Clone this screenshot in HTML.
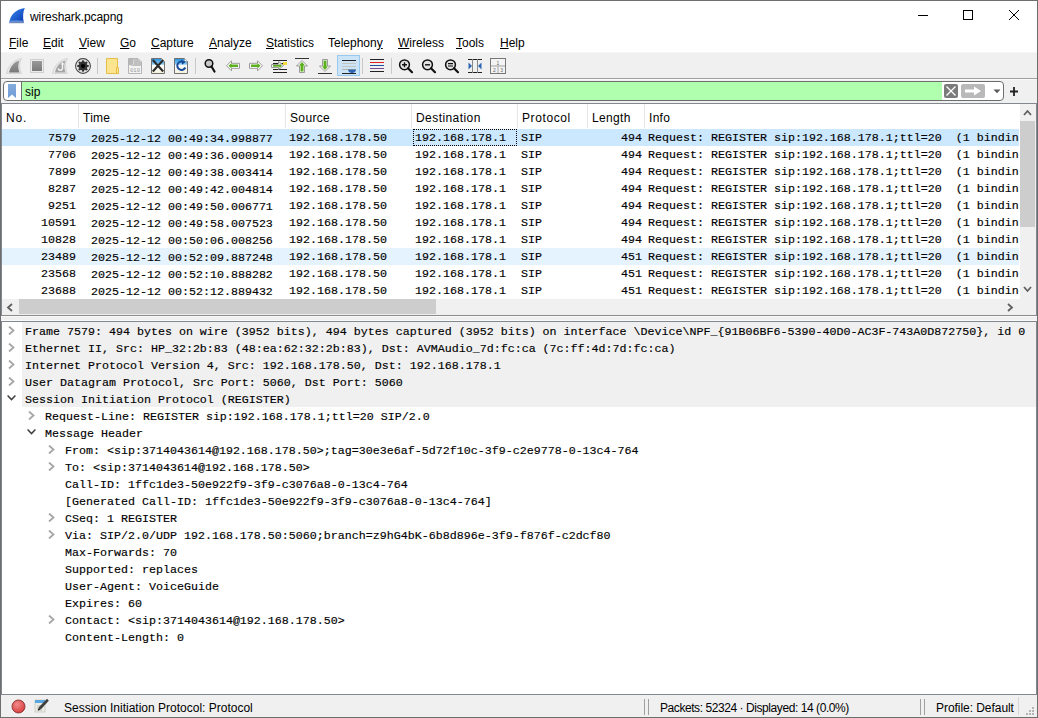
<!DOCTYPE html>
<html><head><meta charset="utf-8">
<style>
*{margin:0;padding:0;box-sizing:border-box}
html,body{width:1038px;height:718px;overflow:hidden;background:#fff}
body{position:relative;font-family:"Liberation Sans",sans-serif;font-size:12px;color:#000}
.a{position:absolute}
.mono{font-family:"Liberation Mono",monospace;font-size:11.67px;white-space:pre;-webkit-text-stroke:0.15px #000}
.win{left:0;top:0;width:1038px;height:718px;border:1px solid #6e6e6e;background:#fff}
#title{left:1px;top:1px;width:1036px;height:30px;background:#fff}
#menu{left:1px;top:31px;width:1036px;height:21px;background:#fff}
#menu span{position:absolute;top:5px}
#tool{left:1px;top:52px;width:1036px;height:27px;background:#f0f0f0;border-top:1px solid #f6f6f6;border-bottom:1px solid #a0a0a0}
#fbar{left:1px;top:79px;width:1036px;height:25px;background:#f0f0f0;border-top:1px solid #fafafa;border-bottom:1px solid #828790}
#plist{left:1px;top:104px;width:1036px;height:195px;background:#fff;overflow:hidden}
.hdr span{position:absolute;top:7px}
.hsep{position:absolute;top:0;width:1px;height:24px;background:#e5e5e5}
.row{position:absolute;left:1px;width:1017px;height:17px}
.row span{position:absolute;top:2px}
.r{text-align:right}
.row{overflow:hidden}
.sel{background:#cce8ff}
.hov{background:#e5f3ff}
.focus{border:1px dotted #000}
#split{left:1px;top:315px;width:1036px;height:7px;background:#f0f0f0;border-top:1px solid #8c8c8c;border-bottom:1px solid #828790}
#tree{left:1px;top:322px;width:1036px;height:373px;background:#fff;overflow:hidden}
.t{position:absolute;height:17px;white-space:pre;font-family:"Liberation Mono",monospace;font-size:11.67px;-webkit-text-stroke:0.15px #000}
.tg{background:#f0f0f0}
#status{left:1px;top:694px;width:1036px;height:23px;background:#f0f0f0;border-top:1px solid #828790}
</style></head><body>
<div class="a win"></div>
<div id="title" class="a">
  <svg class="a" style="left:8px;top:6px" width="16" height="17" viewBox="0 0 16 17">
    <defs><linearGradient id="fin" x1="0" y1="0" x2="1" y2="1"><stop offset="0" stop-color="#3d8cf0"/><stop offset="1" stop-color="#0435b0"/></linearGradient></defs>
    <path d="M0.3 15.8 C1.2 8 6.5 2.2 15.8 1 C14 4.5 13.6 10 14.8 15.8 Z" fill="url(#fin)"/>
    <path d="M0.5 13.8 C5 13 10 13 14.6 13.8 L14.8 15.8 H0.3 Z" fill="#6d95d8" opacity="0.85"/>
    <path d="M0.3 15.8 H14.8" stroke="#7c8aa8" stroke-width="0.8"/>
  </svg>
  <span class="a" style="left:29px;top:9px;font-size:12px;letter-spacing:-0.07px">wireshark.pcapng</span>
  <div class="a" style="left:917px;top:14px;width:10px;height:1px;background:#000"></div>
  <div class="a" style="left:962px;top:9px;width:10px;height:10px;border:1px solid #000"></div>
  <svg class="a" style="left:1008px;top:9px" width="10" height="10" viewBox="0 0 10 10"><path d="M0 0 L10 10 M10 0 L0 10" stroke="#000" stroke-width="1"/></svg>
</div>
<div id="menu" class="a">
  <span style="left:8px"><u>F</u>ile</span>
  <span style="left:42px"><u>E</u>dit</span>
  <span style="left:78px"><u>V</u>iew</span>
  <span style="left:119px"><u>G</u>o</span>
  <span style="left:150px"><u>C</u>apture</span>
  <span style="left:208px"><u>A</u>nalyze</span>
  <span style="left:265px"><u>S</u>tatistics</span>
  <span style="left:327px">Telephon<u>y</u></span>
  <span style="left:397px"><u>W</u>ireless</span>
  <span style="left:455px"><u>T</u>ools</span>
  <span style="left:499px"><u>H</u>elp</span>
</div>
<div id="tool" class="a"></div>
<svg class="a" style="left:0;top:52px" width="520" height="27" viewBox="0 52 520 27">
  <defs>
    <linearGradient id="gfin" x1="0" y1="0" x2="0" y2="1"><stop offset="0" stop-color="#9a9a9a"/><stop offset="1" stop-color="#7a7a7a"/></linearGradient>
    <linearGradient id="gblue" x1="0" y1="0" x2="0" y2="1"><stop offset="0" stop-color="#2a8ad8"/><stop offset="1" stop-color="#bfe0f5"/></linearGradient>
  </defs>
  <!-- start capture fin (disabled) -->
  <path d="M6.5 73.5 C8 66 13 60 21.5 58.5 C19 63 19 68 21.5 73.5 Z" fill="#e8e8e8" stroke="#d6d6d6" stroke-width="1"/>
  <path d="M9 72.5 C10.5 66 14 62 19.5 60.5 C18 64 17.8 68 19.5 72.5 Z" fill="url(#gfin)"/>
  <!-- stop -->
  <rect x="30.5" y="59.5" width="13" height="13" fill="#ececec" stroke="#cfcfcf"/>
  <rect x="32" y="61" width="10" height="10" fill="url(#gfin)"/>
  <!-- restart fin -->
  <path d="M52.5 73.5 C54 66 59 60 67.5 58.5 C65 63 65 68 67.5 73.5 Z" fill="#e8e8e8" stroke="#d6d6d6" stroke-width="1"/>
  <path d="M55 72.5 C56.5 66 60 62 65.5 60.5 C64 64 63.8 68 65.5 72.5 Z" fill="#a4a4a4"/>
  <path d="M62.5 63.5 V68.5 A2.2 2.2 0 0 1 58.2 68.5" fill="none" stroke="#f4f4f4" stroke-width="1.4"/><path d="M60.5 64.5 L62.5 62 L64.5 64.5 Z" fill="#f4f4f4"/>
  <!-- options gear -->
  <circle cx="83" cy="66" r="7.4" fill="#fafafa" stroke="#404040" stroke-width="1.1"/>
  <circle cx="83" cy="66" r="6.2" fill="none" stroke="#c0c0c0" stroke-width="0.6"/>
  <circle cx="83" cy="66" r="4.4" fill="#333"/>
  <circle cx="87.60" cy="66.00" r="1.25" fill="#333"/>
  <circle cx="86.25" cy="69.25" r="1.25" fill="#333"/>
  <circle cx="83.00" cy="70.60" r="1.25" fill="#333"/>
  <circle cx="79.75" cy="69.25" r="1.25" fill="#333"/>
  <circle cx="78.40" cy="66.00" r="1.25" fill="#333"/>
  <circle cx="79.75" cy="62.75" r="1.25" fill="#333"/>
  <circle cx="83.00" cy="61.40" r="1.25" fill="#333"/>
  <circle cx="86.25" cy="62.75" r="1.25" fill="#333"/>
  <circle cx="83" cy="66" r="2.1" fill="#000"/>
  <!-- sep -->
  <rect x="97" y="58" width="1" height="16" fill="#c8c8c8"/>
  <!-- open folder -->
  <path d="M106.5 58.5 H117.5 V72 H118.5 V73.5 H106.5 Z" fill="#fde58f" stroke="#e5bf45" stroke-width="1"/>
  <path d="M116.5 67.5 H118.5 V73.5 H116.5 Z" fill="#fde58f" stroke="#e5bf45" stroke-width="1"/>
  <!-- save (disabled) -->
  <path d="M128.5 58.5 H138 L141.5 62 V73.5 H128.5 Z" fill="#f4f4f4" stroke="#b4b4b4"/>
  <path d="M129 59 H134 L132.5 65 H129 Z" fill="#b8b8b8"/>
  <path d="M129 66 H141 V62 L138 59 H134.5 L133 65 Z" fill="#c0c0c0"/>
  <text x="135" y="72" font-family="Liberation Mono" font-size="5.5" fill="#9a9a9a" text-anchor="middle">010</text>
  <!-- close -->
  <defs><linearGradient id="gpage" x1="0" y1="0" x2="0" y2="1"><stop offset="0" stop-color="#1e90e0"/><stop offset="0.38" stop-color="#8ccbf2"/><stop offset="0.45" stop-color="#ffffff"/><stop offset="1" stop-color="#f4f1dc"/></linearGradient></defs>
  <path d="M151.5 58.5 H161.5 L164.5 61.5 V73.5 H151.5 Z" fill="url(#gpage)" stroke="#707070"/>
  <path d="M161.5 58.5 V61.5 H164.5" fill="#fff" stroke="#909090" stroke-width="0.6"/>
  <path d="M152.8 60 L163.2 71.5 M163.2 60 L152.8 71.5" stroke="#2a2a2a" stroke-width="2.1"/>
  <!-- reload -->
  <path d="M174.5 58.5 H184.5 L187.5 61.5 V73.5 H174.5 Z" fill="url(#gpage)" stroke="#707070"/>
  <path d="M184.5 58.5 V61.5 H187.5" fill="#fff" stroke="#909090" stroke-width="0.6"/>
  <path d="M183.8 62.2 A4.2 4.2 0 1 0 185.3 67.5" fill="none" stroke="#1a4a9a" stroke-width="2"/>
  <path d="M181 59.8 L185.8 61.8 L182.2 64.8 Z" fill="#1a4a9a"/>
  <!-- sep -->
  <rect x="195" y="58" width="1" height="16" fill="#c8c8c8"/>
  <!-- find -->
  <circle cx="209" cy="63.5" r="3.8" fill="#c8c8c8" stroke="#111" stroke-width="1.5"/>
  <path d="M211.5 66.5 L214.5 71.5" stroke="#111" stroke-width="2.2" stroke-linecap="round"/>
  <!-- back -->
  <path d="M226.5 65.8 L231.5 60.8 V63.3 H239.5 V68.3 H231.5 V70.8 Z" fill="#fff" stroke="#9a9a9a" stroke-width="1"/>
  <path d="M228.5 65.8 L231.5 63 V64.5 H238 V67 H231.5 V68.6 Z" fill="#5cb020"/>
  <!-- forward -->
  <path d="M262.5 65.8 L257.5 60.8 V63.3 H249.5 V68.3 H257.5 V70.8 Z" fill="#fff" stroke="#9a9a9a" stroke-width="1"/>
  <path d="M260.5 65.8 L257.5 63 V64.5 H251 V67 H257.5 V68.6 Z" fill="#5cb020"/>
  <!-- go to packet -->
  <path d="M273 60.5 H287 M273 63.5 H287 M273 69.5 H287 M273 72.5 H287" stroke="#222" stroke-width="1"/>
  <rect x="283" y="62" width="4" height="3" fill="#f2dc3a"/>
  <path d="M271.5 64.5 H278.5 V61.5 L283.5 65.5 L278.5 69.5 V67.5 H271.5 Z" fill="#fff" stroke="#9a9a9a"/>
  <path d="M273 65 H279.5 V63.5 L282 65.8 L279.5 68 V66.8 H273 Z" fill="#5cb020"/>
  <!-- first packet -->
  <path d="M295 58.5 H309" stroke="#333" stroke-width="1"/>
  <path d="M302 60.5 L307.5 66 H304.5 V72.5 H299.5 V66 H296.5 Z" fill="#fff" stroke="#9a9a9a"/>
  <path d="M302 62 L305 65.5 H303.5 V71.5 H300.5 V65.5 H299 Z" fill="#5cb020"/>
  <!-- last packet -->
  <path d="M318 73.5 H332" stroke="#333" stroke-width="1"/>
  <path d="M325 71.5 L330.5 66 H327.5 V59.5 H322.5 V66 H319.5 Z" fill="#fff" stroke="#9a9a9a"/>
  <path d="M325 70 L328 66.5 H326.5 V60.5 H323.5 V66.5 H322 Z" fill="#5cb020"/>
  <!-- autoscroll pressed -->
  <rect x="337.5" y="55.5" width="22" height="20" fill="#cce4f7" stroke="#99c9ef"/>
  <path d="M342 60.5 H356 M342 73.5 H356" stroke="#222" stroke-width="1"/>
  <path d="M342 63.5 H356 M342 66.5 H356" stroke="#c4c4bc" stroke-width="1"/>
  <path d="M342 69.5 H356" stroke="#b0b0a8" stroke-width="1"/>
  <path d="M348 69.5 H356 C356 72 353.5 73 352 73 C350.5 73 348 72 348 69.5 Z" fill="#2e64b4"/>
  <!-- sep -->
  <rect x="362" y="58" width="1" height="16" fill="#c8c8c8"/>
  <!-- colorize -->
  <path d="M370 59.5 H384" stroke="#222" stroke-width="1"/>
  <path d="M370 62.5 H384" stroke="#e02020" stroke-width="1"/>
  <path d="M370 65.5 H384" stroke="#2050a0" stroke-width="1"/>
  <path d="M370 68.5 H384" stroke="#7a4a90" stroke-width="1"/>
  <path d="M370 71.5 H384" stroke="#222" stroke-width="1"/>
  <!-- sep -->
  <rect x="391" y="58" width="1" height="16" fill="#c8c8c8"/>
  <!-- zoom in -->
  <circle cx="404.5" cy="64.8" r="4.9" fill="#e4e4e4" stroke="#111" stroke-width="1.5"/>
  <path d="M408 68.3 L412 72.2" stroke="#111" stroke-width="2.2" stroke-linecap="round"/>
  <path d="M402 64.8 H407 M404.5 62.3 V67.3" stroke="#111" stroke-width="1.4"/>
  <!-- zoom out -->
  <circle cx="427.5" cy="64.8" r="4.9" fill="#e4e4e4" stroke="#111" stroke-width="1.5"/>
  <path d="M431 68.3 L435 72.2" stroke="#111" stroke-width="2.2" stroke-linecap="round"/>
  <path d="M425 64.8 H430" stroke="#111" stroke-width="1.4"/>
  <!-- normal size -->
  <circle cx="450.5" cy="64.8" r="4.9" fill="#e4e4e4" stroke="#111" stroke-width="1.5"/>
  <path d="M454 68.3 L458 72.2" stroke="#111" stroke-width="2.2" stroke-linecap="round"/>
  <path d="M448 63.6 H453 M448 66 H453" stroke="#111" stroke-width="1.1"/>
  <!-- resize columns -->
  <path d="M468 59.5 H482 M468 72.5 H482" stroke="#222" stroke-width="1"/>
  <path d="M472.5 59 V73 M477.5 59 V73" stroke="#888" stroke-width="1"/>
  <path d="M468.5 62.5 L472 66 L468.5 69.5 Z" fill="#2e64b4"/>
  <path d="M481.5 62.5 L478 66 L481.5 69.5 Z" fill="#2e64b4"/>
  <!-- layout -->
  <rect x="490.5" y="58.5" width="15" height="15" fill="#f4f4f4" stroke="#777"/>
  <path d="M491 66 H505 M498 66 V73" stroke="#bbb" stroke-width="1.4"/>
  <text x="498" y="64.5" font-family="Liberation Sans" font-size="5" fill="#666" text-anchor="middle">1</text>
  <text x="494.3" y="72" font-family="Liberation Sans" font-size="5" fill="#666" text-anchor="middle">2</text>
  <text x="501.7" y="72" font-family="Liberation Sans" font-size="5" fill="#666" text-anchor="middle">3</text>
</svg>
<div id="fbar" class="a">
  <div class="a" style="left:2px;top:1px;width:1001px;height:20px;border:1px solid #6e6e6e;border-radius:4px;background:#fff;overflow:hidden">
    <svg class="a" style="left:4px;top:2px" width="8" height="14" viewBox="0 0 8 14"><defs><linearGradient id="bm" x1="0" y1="0" x2="0" y2="1"><stop offset="0" stop-color="#86acdc"/><stop offset="1" stop-color="#6f9bd6"/></linearGradient></defs><path d="M0 0 H8 V14 L4 10.5 L0 14 Z" fill="url(#bm)"/></svg>
    <div class="a" style="left:17px;top:0;width:1px;height:18px;background:#6e6e6e"></div>
    <div class="a" style="left:18px;top:0;width:920px;height:18px;background:#afffaf"></div>
    <span class="a" style="left:21px;top:3px">sip</span>
    <div class="a" style="left:940px;top:2px;width:14px;height:14px;background:#7b7b7b;border-radius:2px"></div>
    <svg class="a" style="left:940px;top:2px" width="14" height="14" viewBox="0 0 14 14"><path d="M2.5 2.5 L11.5 11.5 M11.5 2.5 L2.5 11.5" stroke="#fff" stroke-width="1.3"/></svg>
    <div class="a" style="left:957px;top:2px;width:24px;height:14px;background:#b9b9b9;border-radius:2px"></div>
    <svg class="a" style="left:957px;top:2px" width="24" height="14" viewBox="0 0 24 14"><path d="M4 5.5 H13 V2.5 L20 7 L13 11.5 V8.5 H4 Z" fill="#fff"/></svg>
    <svg class="a" style="left:989px;top:7px" width="8" height="5" viewBox="0 0 8 5"><path d="M0.5 0.5 H7.5 L4 4.2 Z" fill="#5a5a5a"/></svg>
  </div>
  <svg class="a" style="left:1008px;top:6px" width="11" height="11" viewBox="0 0 11 11"><path d="M5 1 V10 M1 5.5 H9" stroke="#222" stroke-width="1.8"/></svg>
</div>
<div id="plist" class="a">
<div class="a hdr" style="left:0;top:0;width:1017px;height:25px">
<span style="left:5px;letter-spacing:0.8px">No.</span>
<span style="left:82px;letter-spacing:0.25px">Time</span>
<span style="left:289px;letter-spacing:0.35px">Source</span>
<span style="left:415px;letter-spacing:0.43px">Destination</span>
<span style="left:521px;letter-spacing:0.6px">Protocol</span>
<span style="left:591px;letter-spacing:0.35px">Length</span>
<span style="left:648px;letter-spacing:0.3px">Info</span>
<div class="hsep" style="left:77px"></div>
<div class="hsep" style="left:284px"></div>
<div class="hsep" style="left:410px"></div>
<div class="hsep" style="left:516px"></div>
<div class="hsep" style="left:586px"></div>
<div class="hsep" style="left:643px"></div>
</div>
<div class="row sel" style="top:25px">
<span class="mono r" style="right:943px">7579</span>
<span class="mono" style="left:89px;top:3px">2025-12-12 00:49:34.998877</span>
<span class="mono" style="left:287px">192.168.178.50</span>
<span class="mono" style="left:413px">192.168.178.1</span>
<span class="mono" style="left:519px">SIP</span>
<span class="mono r" style="right:377px">494</span>
<span class="mono" style="left:646px">Request: REGISTER sip:192.168.178.1;ttl=20  (1 binding #0)</span>
<div class="a focus" style="left:411px;top:0;width:104px;height:17px"></div>
</div>
<div class="row" style="top:42px">
<span class="mono r" style="right:943px">7706</span>
<span class="mono" style="left:89px;top:3px">2025-12-12 00:49:36.000914</span>
<span class="mono" style="left:287px">192.168.178.50</span>
<span class="mono" style="left:413px">192.168.178.1</span>
<span class="mono" style="left:519px">SIP</span>
<span class="mono r" style="right:377px">494</span>
<span class="mono" style="left:646px">Request: REGISTER sip:192.168.178.1;ttl=20  (1 binding #0)</span>
</div>
<div class="row" style="top:59px">
<span class="mono r" style="right:943px">7899</span>
<span class="mono" style="left:89px;top:3px">2025-12-12 00:49:38.003414</span>
<span class="mono" style="left:287px">192.168.178.50</span>
<span class="mono" style="left:413px">192.168.178.1</span>
<span class="mono" style="left:519px">SIP</span>
<span class="mono r" style="right:377px">494</span>
<span class="mono" style="left:646px">Request: REGISTER sip:192.168.178.1;ttl=20  (1 binding #0)</span>
</div>
<div class="row" style="top:76px">
<span class="mono r" style="right:943px">8287</span>
<span class="mono" style="left:89px;top:3px">2025-12-12 00:49:42.004814</span>
<span class="mono" style="left:287px">192.168.178.50</span>
<span class="mono" style="left:413px">192.168.178.1</span>
<span class="mono" style="left:519px">SIP</span>
<span class="mono r" style="right:377px">494</span>
<span class="mono" style="left:646px">Request: REGISTER sip:192.168.178.1;ttl=20  (1 binding #0)</span>
</div>
<div class="row" style="top:93px">
<span class="mono r" style="right:943px">9251</span>
<span class="mono" style="left:89px;top:3px">2025-12-12 00:49:50.006771</span>
<span class="mono" style="left:287px">192.168.178.50</span>
<span class="mono" style="left:413px">192.168.178.1</span>
<span class="mono" style="left:519px">SIP</span>
<span class="mono r" style="right:377px">494</span>
<span class="mono" style="left:646px">Request: REGISTER sip:192.168.178.1;ttl=20  (1 binding #0)</span>
</div>
<div class="row" style="top:110px">
<span class="mono r" style="right:943px">10591</span>
<span class="mono" style="left:89px;top:3px">2025-12-12 00:49:58.007523</span>
<span class="mono" style="left:287px">192.168.178.50</span>
<span class="mono" style="left:413px">192.168.178.1</span>
<span class="mono" style="left:519px">SIP</span>
<span class="mono r" style="right:377px">494</span>
<span class="mono" style="left:646px">Request: REGISTER sip:192.168.178.1;ttl=20  (1 binding #0)</span>
</div>
<div class="row" style="top:127px">
<span class="mono r" style="right:943px">10828</span>
<span class="mono" style="left:89px;top:3px">2025-12-12 00:50:06.008256</span>
<span class="mono" style="left:287px">192.168.178.50</span>
<span class="mono" style="left:413px">192.168.178.1</span>
<span class="mono" style="left:519px">SIP</span>
<span class="mono r" style="right:377px">494</span>
<span class="mono" style="left:646px">Request: REGISTER sip:192.168.178.1;ttl=20  (1 binding #0)</span>
</div>
<div class="row hov" style="top:144px">
<span class="mono r" style="right:943px">23489</span>
<span class="mono" style="left:89px;top:3px">2025-12-12 00:52:09.887248</span>
<span class="mono" style="left:287px">192.168.178.50</span>
<span class="mono" style="left:413px">192.168.178.1</span>
<span class="mono" style="left:519px">SIP</span>
<span class="mono r" style="right:377px">451</span>
<span class="mono" style="left:646px">Request: REGISTER sip:192.168.178.1;ttl=20  (1 binding #0)</span>
</div>
<div class="row" style="top:161px">
<span class="mono r" style="right:943px">23568</span>
<span class="mono" style="left:89px;top:3px">2025-12-12 00:52:10.888282</span>
<span class="mono" style="left:287px">192.168.178.50</span>
<span class="mono" style="left:413px">192.168.178.1</span>
<span class="mono" style="left:519px">SIP</span>
<span class="mono r" style="right:377px">451</span>
<span class="mono" style="left:646px">Request: REGISTER sip:192.168.178.1;ttl=20  (1 binding #0)</span>
</div>
<div class="row" style="top:178px">
<span class="mono r" style="right:943px">23688</span>
<span class="mono" style="left:89px;top:3px">2025-12-12 00:52:12.889432</span>
<span class="mono" style="left:287px">192.168.178.50</span>
<span class="mono" style="left:413px">192.168.178.1</span>
<span class="mono" style="left:519px">SIP</span>
<span class="mono r" style="right:377px">451</span>
<span class="mono" style="left:646px">Request: REGISTER sip:192.168.178.1;ttl=20  (1 binding #0)</span>
</div>
</div>

<div id="vscroll" class="a" style="left:1020px;top:104px;width:16px;height:195px;background:#f0f0f0">
  <svg class="a" style="left:3px;top:5px" width="9" height="7" viewBox="0 0 9 7"><path d="M1 6 L4.5 2 L8 6" fill="none" stroke="#606060" stroke-width="1.8"/></svg>
  <div class="a" style="left:0;top:17px;width:15px;height:106px;background:#cdcdcd"></div>
  <svg class="a" style="left:3px;top:182px" width="9" height="7" viewBox="0 0 9 7"><path d="M1 1 L4.5 5 L8 1" fill="none" stroke="#606060" stroke-width="1.8"/></svg>
</div>
<div id="hscroll" class="a" style="left:1px;top:299px;width:1036px;height:16px;background:#f0f0f0">
  <svg class="a" style="left:5px;top:4px" width="7" height="9" viewBox="0 0 7 9"><path d="M6 1 L2 4.5 L6 8" fill="none" stroke="#606060" stroke-width="1.8"/></svg>
  <div class="a" style="left:18px;top:0;width:417px;height:15px;background:#cdcdcd"></div>
  <svg class="a" style="left:1006px;top:4px" width="7" height="9" viewBox="0 0 7 9"><path d="M1 1 L5 4.5 L1 8" fill="none" stroke="#606060" stroke-width="1.8"/></svg>
</div>
<div id="split" class="a"><div class="a" style="left:0;top:0;width:1036px;height:1px;background:#f9f9f9"></div><div class="a" style="left:0;top:4px;width:1036px;height:1px;background:#f9f9f9"></div></div>
<div id="tree" class="a">
<div class="a" style="left:21px;top:0;width:1015px;height:85px;background:#f0f0f0"></div>
<svg class="a" style="left:7px;top:4px" width="8" height="9" viewBox="0 0 8 9"><path d="M1 0.5 L5.5 4.5 L1 8.5" fill="none" stroke="#a6a6a6" stroke-width="1.8"/></svg>
<div class="t" style="left:24px;top:3px">Frame 7579: 494 bytes on wire (3952 bits), 494 bytes captured (3952 bits) on interface \Device\NPF_{91B06BF6-5390-40D0-AC3F-743A0D872750}, id 0</div>
<svg class="a" style="left:7px;top:21px" width="8" height="9" viewBox="0 0 8 9"><path d="M1 0.5 L5.5 4.5 L1 8.5" fill="none" stroke="#a6a6a6" stroke-width="1.8"/></svg>
<div class="t" style="left:24px;top:20px">Ethernet II, Src: HP_32:2b:83 (48:ea:62:32:2b:83), Dst: AVMAudio_7d:fc:ca (7c:ff:4d:7d:fc:ca)</div>
<svg class="a" style="left:7px;top:38px" width="8" height="9" viewBox="0 0 8 9"><path d="M1 0.5 L5.5 4.5 L1 8.5" fill="none" stroke="#a6a6a6" stroke-width="1.8"/></svg>
<div class="t" style="left:24px;top:37px">Internet Protocol Version 4, Src: 192.168.178.50, Dst: 192.168.178.1</div>
<svg class="a" style="left:7px;top:55px" width="8" height="9" viewBox="0 0 8 9"><path d="M1 0.5 L5.5 4.5 L1 8.5" fill="none" stroke="#a6a6a6" stroke-width="1.8"/></svg>
<div class="t" style="left:24px;top:54px">User Datagram Protocol, Src Port: 5060, Dst Port: 5060</div>
<svg class="a" style="left:6px;top:73px" width="9" height="6" viewBox="0 0 9 6"><path d="M0.6 0.6 L4.5 4.6 L8.4 0.6" fill="none" stroke="#404040" stroke-width="1.5"/></svg>
<div class="t" style="left:24px;top:71px">Session Initiation Protocol (REGISTER)</div>
<svg class="a" style="left:27px;top:89px" width="8" height="9" viewBox="0 0 8 9"><path d="M1 0.5 L5.5 4.5 L1 8.5" fill="none" stroke="#a6a6a6" stroke-width="1.8"/></svg>
<div class="t" style="left:44px;top:88px">Request-Line: REGISTER sip:192.168.178.1;ttl=20 SIP/2.0</div>
<svg class="a" style="left:26px;top:107px" width="9" height="6" viewBox="0 0 9 6"><path d="M0.6 0.6 L4.5 4.6 L8.4 0.6" fill="none" stroke="#404040" stroke-width="1.5"/></svg>
<div class="t" style="left:44px;top:105px">Message Header</div>
<svg class="a" style="left:47px;top:123px" width="8" height="9" viewBox="0 0 8 9"><path d="M1 0.5 L5.5 4.5 L1 8.5" fill="none" stroke="#a6a6a6" stroke-width="1.8"/></svg>
<div class="t" style="left:64px;top:122px">From: &lt;sip:3714043614@192.168.178.50&gt;;tag=30e3e6af-5d72f10c-3f9-c2e9778-0-13c4-764</div>
<svg class="a" style="left:47px;top:140px" width="8" height="9" viewBox="0 0 8 9"><path d="M1 0.5 L5.5 4.5 L1 8.5" fill="none" stroke="#a6a6a6" stroke-width="1.8"/></svg>
<div class="t" style="left:64px;top:139px">To: &lt;sip:3714043614@192.168.178.50&gt;</div>
<div class="t" style="left:64px;top:156px">Call-ID: 1ffc1de3-50e922f9-3f9-c3076a8-0-13c4-764</div>
<div class="t" style="left:64px;top:173px">[Generated Call-ID: 1ffc1de3-50e922f9-3f9-c3076a8-0-13c4-764]</div>
<svg class="a" style="left:47px;top:191px" width="8" height="9" viewBox="0 0 8 9"><path d="M1 0.5 L5.5 4.5 L1 8.5" fill="none" stroke="#a6a6a6" stroke-width="1.8"/></svg>
<div class="t" style="left:64px;top:190px">CSeq: 1 REGISTER</div>
<svg class="a" style="left:47px;top:208px" width="8" height="9" viewBox="0 0 8 9"><path d="M1 0.5 L5.5 4.5 L1 8.5" fill="none" stroke="#a6a6a6" stroke-width="1.8"/></svg>
<div class="t" style="left:64px;top:207px">Via: SIP/2.0/UDP 192.168.178.50:5060;branch=z9hG4bK-6b8d896e-3f9-f876f-c2dcf80</div>
<div class="t" style="left:64px;top:224px">Max-Forwards: 70</div>
<div class="t" style="left:64px;top:241px">Supported: replaces</div>
<div class="t" style="left:64px;top:258px">User-Agent: VoiceGuide</div>
<div class="t" style="left:64px;top:275px">Expires: 60</div>
<svg class="a" style="left:47px;top:293px" width="8" height="9" viewBox="0 0 8 9"><path d="M1 0.5 L5.5 4.5 L1 8.5" fill="none" stroke="#a6a6a6" stroke-width="1.8"/></svg>
<div class="t" style="left:64px;top:292px">Contact: &lt;sip:3714043614@192.168.178.50&gt;</div>
<div class="t" style="left:64px;top:309px">Content-Length: 0</div>
</div>
<div id="status" class="a">
  <svg class="a" style="left:10px;top:4px" width="15" height="15" viewBox="0 0 15 15"><defs><radialGradient id="rd" cx="0.4" cy="0.35" r="0.7"><stop offset="0" stop-color="#f08a8a"/><stop offset="1" stop-color="#d83a3a"/></radialGradient></defs><circle cx="7.5" cy="7.5" r="6.5" fill="url(#rd)" stroke="#8a3030" stroke-width="0.9"/></svg>
  <svg class="a" style="left:33px;top:3px" width="15" height="15" viewBox="0 0 15 15">
    <rect x="1" y="2" width="10" height="12" fill="#ecebe4" stroke="#c8c8c0" stroke-width="0.8"/>
    <rect x="1" y="2" width="10" height="3" fill="#5aa6e0"/>
    <path d="M3 8h5 M3 10h4 M3 12h5" stroke="#b0b0b0" stroke-width="0.8"/>
    <path d="M13 0.8 L5 9 L4 12.5 L7.2 11 L14.8 2.8 Z" fill="#404040"/><path d="M4 12.5 L4.6 10.5 L6 11.8 Z" fill="#111"/>
  </svg>
  <span class="a" style="left:63px;top:6px">Session Initiation Protocol: Protocol</span>
  <div class="a" style="left:643px;top:4px;width:1px;height:16px;background:#a0a0a0"></div>
  <div class="a" style="left:647px;top:4px;width:1px;height:16px;background:#a0a0a0"></div>
  <span class="a" style="left:659px;top:6px;letter-spacing:-0.43px">Packets: 52324 · Displayed: 14 (0.0%)</span>
  <div class="a" style="left:919px;top:4px;width:1px;height:16px;background:#a0a0a0"></div>
  <div class="a" style="left:923px;top:4px;width:1px;height:16px;background:#a0a0a0"></div>
  <span class="a" style="left:935px;top:6px;letter-spacing:-0.05px">Profile: Default</span>
  <div class="a" style="left:1017px;top:2px;width:1px;height:18px;background:#d6d6d6"></div>
  <svg class="a" style="left:1024px;top:11px" width="10" height="10" viewBox="0 0 10 10" fill="#b4b4b4"><rect x="7" y="1" width="2" height="2"/><rect x="4" y="4" width="2" height="2"/><rect x="7" y="4" width="2" height="2"/><rect x="1" y="7" width="2" height="2"/><rect x="4" y="7" width="2" height="2"/><rect x="7" y="7" width="2" height="2"/></svg>
</div>

<div class="a" style="left:1px;top:103px;width:1px;height:213px;background:#828790"></div>
<div class="a" style="left:1036px;top:103px;width:1px;height:213px;background:#828790"></div>
<div class="a" style="left:1px;top:321px;width:1px;height:374px;background:#828790"></div>
<div class="a" style="left:1036px;top:321px;width:1px;height:374px;background:#828790"></div>
</body></html>
